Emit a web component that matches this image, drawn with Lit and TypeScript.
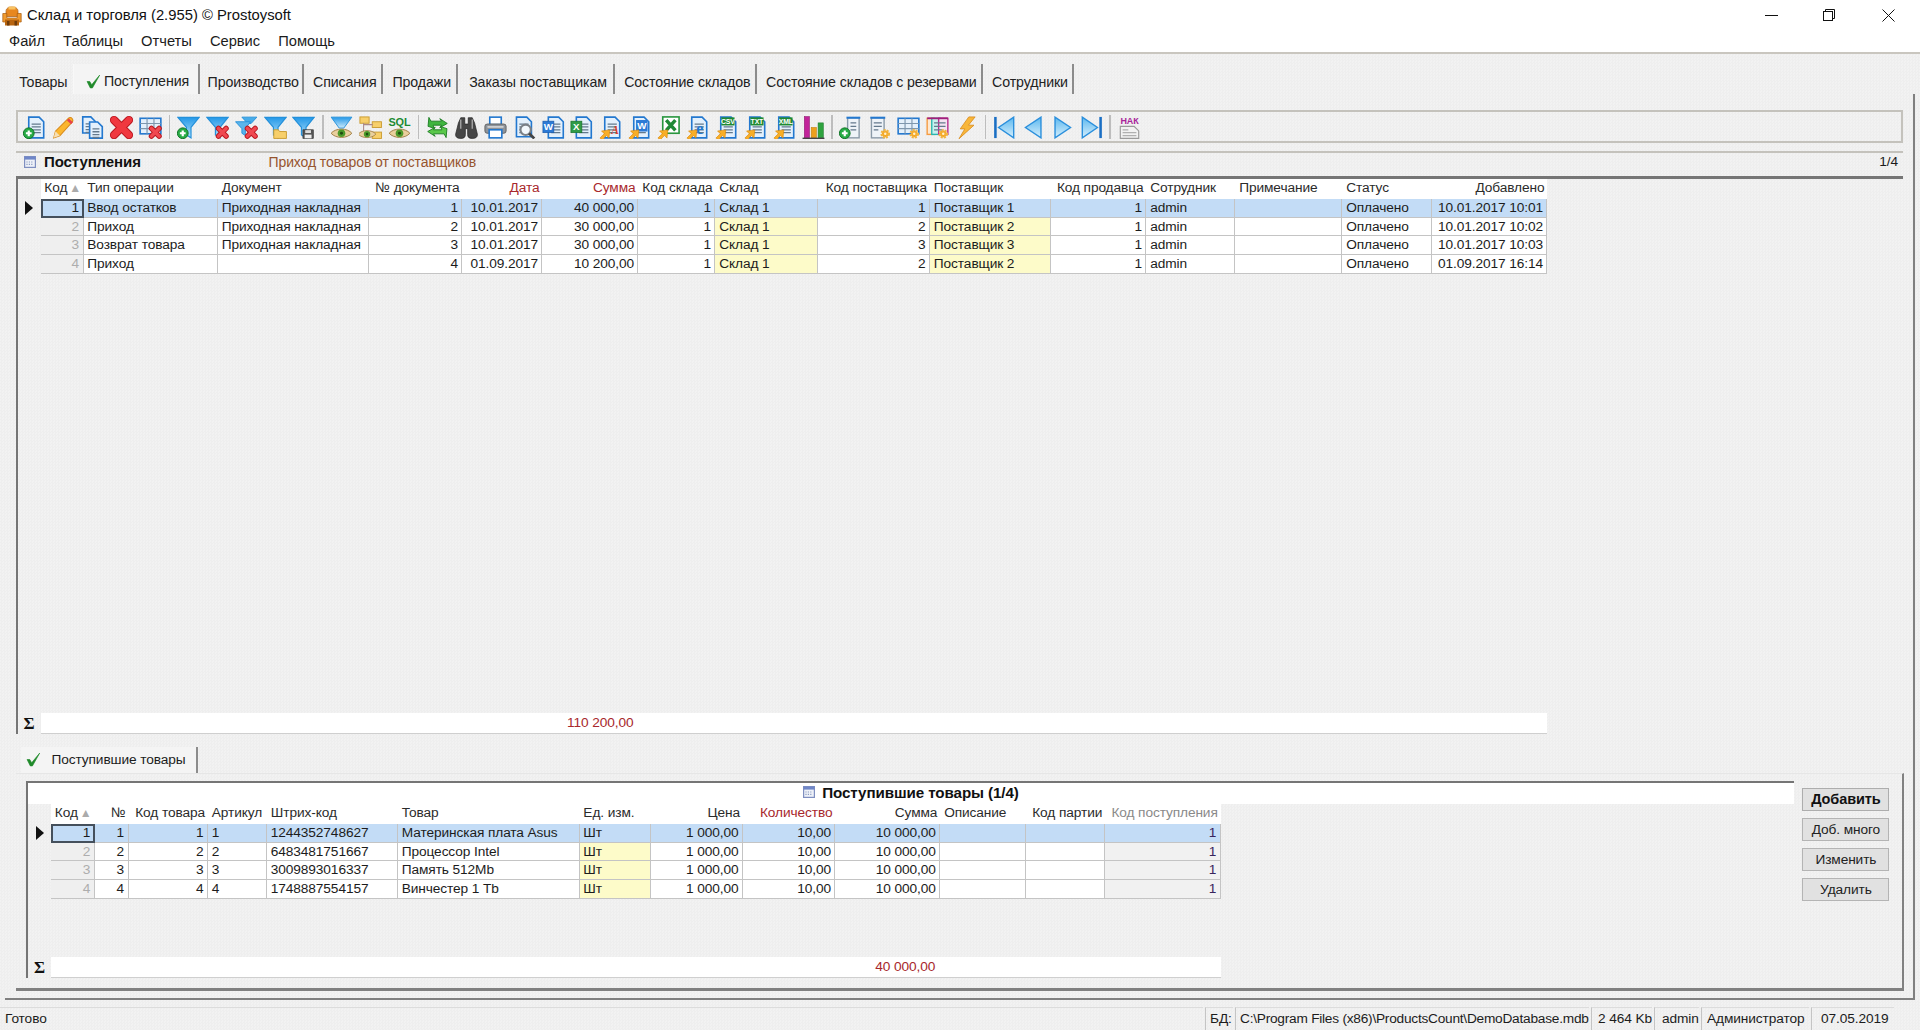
import { LitElement, html, css, svg } from "lit";
import { customElement, property } from "lit/decorators.js";

const S = (c: any, size = 23) => html`<svg class="ic" viewBox="0 0 20 20" width=${size} height=${size}>${c}</svg>`;

const plus = svg`<circle cx="5" cy="15" r="4.700" fill="#27ab45" stroke="#0c6f22" stroke-width=".8"/><path d="M2.500 15h5M5 12.500v5" stroke="#fff" stroke-width="1.900"/>`;
const redx = svg`<path d="M10.800 10.800l6.700 6.700M17.500 10.800l-6.700 6.700" stroke="#b9161e" stroke-width="4.600" stroke-linecap="round"/><path d="M10.800 10.800l6.700 6.700M17.500 10.800l-6.700 6.700" stroke="#f04850" stroke-width="3" stroke-linecap="round"/>`;
const gear = svg`<circle cx="15" cy="15.500" r="3" fill="#f5a623" stroke="#f2b440" stroke-width="2.400" stroke-dasharray="1.600 .9"/><circle cx="15" cy="15.500" r="1.100" fill="#fff3d0"/>`;
const arrow = svg`<path d="M.800 19.200l3.800-3.800-2.400-2.400 7.200-.9-.7 7.100-2.200-2.200-3.500 3.500z" fill="#f8ae27" stroke="#d98300" stroke-width=".5"/>`;
const doc = (x = 4, y = 1, w = 13, h = 17) => svg`<path d="M${x} ${y}h${w - 4}l4 4v${h - 4}h-${w}z" fill="#e3f0fc" stroke="#2378cf" stroke-width="1.400"/><path d="M${x + 2.500} ${y + 6}h${w - 5}M${x + 2.500} ${y + 8.500}h${w - 5}M${x + 2.500} ${y + 11}h${w - 5}M${x + 2.500} ${y + 13.500}h${w - 5}" stroke="#64798c" stroke-width="1.100"/>`;
const funnel = svg`<defs><linearGradient id="fg" x1="0" x2="0" y1="0" y2="1"><stop offset="0" stop-color="#2398e8"/><stop offset="1" stop-color="#b5e2fb"/></linearGradient></defs><path d="M.800 1.200h18.400l-7 8.600v9.200l-4-2.500V9.800z" fill="url(#fg)" stroke="#2490da" stroke-width="1"/>`;
const eye = svg`<path d="M1 15C5 10.200 15 10.200 19 15 15 19.800 5 19.800 1 15z" fill="#e9cf9d" stroke="#9c7a40" stroke-width=".8"/><circle cx="10" cy="15" r="3.300" fill="#4c9a2a"/><circle cx="10" cy="15" r="1.300" fill="#1f4d10"/>`;
const tag = (t: string, c = "#1f8a32") => svg`<rect x="5.500" y="1.200" width="11.500" height="7" fill=${c}/><text x="11.200" y="7.200" text-anchor="middle" font-size="6" font-weight="700" fill="#fff" font-family="Liberation Sans, sans-serif">${t}</text>`;
const grid = svg`<rect x="1" y="2" width="18" height="13.500" fill="#e4f0fb" stroke="#2378cf" stroke-width="1.400"/><path d="M1 6.500h18M1 11h18M7 2v13.500M13 2v13.500" stroke="#7e97ae"/>`;

const ICONS: Record<string, any> = {
  docadd: svg`${doc(5, 1, 13, 18)}${plus}`,
  pencil: svg`<path d="M1.500 19l1.500-5.800L14 2.200c1.200-1.200 2.700-1 3.500 0s.8 2.300-.2 3.300L6.800 17.200z" fill="#fbb62f" stroke="#d98a1a" stroke-width=".9"/><path d="M13.800 3l3.600 3.300" stroke="#e8424a" stroke-width="2.400"/><path d="M1.500 19L3 13.200l3.800 4z" fill="#f6dfb4"/>`,
  copy: svg`${doc(1.500, .8, 11, 14)}${doc(7.500, 5.200, 11, 14)}`,
  del: svg`<path d="M3.500 3.500l13 13M16.500 3.500l-13 13" stroke="#b9161e" stroke-width="7.200" stroke-linecap="round"/><path d="M3.500 3.500l13 13M16.500 3.500l-13 13" stroke="#f0383f" stroke-width="5.600" stroke-linecap="round"/>`,
  griddel: svg`${grid}${redx}`,
  fadd: svg`${funnel}${plus}`,
  fdel: svg`${funnel}${redx}`,
  fdel2: svg`<path d="M6 1h13l-5 5.500H11z" fill="#47ace9" stroke="#2490da" stroke-width=".8"/><path d="M.500 5h13l-4.500 6v6l-3-2v-4z" fill="#5bb5ec" stroke="#2490da" stroke-width=".8"/>${redx}`,
  ffold: svg`${funnel}<path d="M8.500 12h4l1 1.500H19.500v6H8.500z" fill="#f7cf6a" stroke="#c99a2e" stroke-width=".8"/>`,
  fsave: svg`${funnel}<rect x="9.500" y="12" width="9" height="7.500" fill="#555" stroke="#222" stroke-width=".5"/><rect x="11.500" y="12.300" width="5" height="2.500" fill="#ddd"/><rect x="11" y="16.200" width="6" height="3.200" fill="#eee"/>`,
  feye: svg`<defs><linearGradient id="fg2" x1="0" x2="0" y1="0" y2="1"><stop offset="0" stop-color="#2398e8"/><stop offset="1" stop-color="#cdeafb"/></linearGradient></defs><path d="M1 1h18l-7 9.500H8z" fill="url(#fg2)" stroke="#2490da" stroke-width=".8"/>${eye}`,
  treeeye: svg`<rect x=".800" y=".800" width="8" height="5.500" fill="#f7cf6a" stroke="#c99a2e" stroke-width=".8"/><rect x="11.500" y="5" width="8" height="5" fill="#f7cf6a" stroke="#c99a2e" stroke-width=".8"/><rect x="11.500" y="14" width="8" height="5.500" fill="#f7cf6a" stroke="#c99a2e" stroke-width=".8"/><path d="M4 6v8M4 7.500h8" stroke="#a88" stroke-width=".9"/><g transform="translate(-1.500 3) scale(.85)">${eye}</g>`,
  sqleye: svg`<text x="10" y="8.500" text-anchor="middle" font-size="9.500" font-weight="700" fill="#1c8a32" font-family="Liberation Sans, sans-serif">SQL</text>${eye}`,
  sync: svg`<path d="M2.500 1.200l1.800 3.300h9.200L12 2.300l6.500 4.200-6.500 3.700 1.500-2.200H6.200l1 2.700L1.800 9z" fill="#3fb53f" stroke="#1d7d24" stroke-width=".8"/><path d="M17.500 18.800l-1.800-3.300H6.500L8 17.700 1.500 13.500 8 9.800l-1.500 2.200h7.300l-1-2.700L18.200 11z" fill="#5ac84a" stroke="#1d7d24" stroke-width=".8"/>`,
  binoc: svg`<path d="M3 6l2-4.500h3.500V7h3V1.500H15L17 6l2.500 10c0 2.500-1.500 3.500-4.500 3.500s-4-1.200-4-3.500V11H9v5c0 2.300-1 3.500-4 3.500S.5 18.500.5 16z" fill="#474747" stroke="#222" stroke-width=".6"/><path d="M5 3v8M15 3v8" stroke="#a6a6a6" stroke-width="1.200"/>`,
  print: svg`<rect x="5" y="1" width="10" height="6.500" fill="#fff" stroke="#2378cf" stroke-width="1.400"/><rect x=".800" y="7" width="18.400" height="8" rx="2" fill="#8f949a" stroke="#5e5e5e" stroke-width=".8"/><rect x="4.500" y="12" width="11" height="7" fill="#fff" stroke="#2378cf" stroke-width="1.400"/><path d="M3 9.500h14" stroke="#e3e3e3" stroke-width="1.200"/>`,
  preview: svg`${doc(3, 1, 13, 17)}<circle cx="11" cy="12" r="4.500" fill="#f2f8fd" stroke="#7a8087" stroke-width="1.800"/><path d="M14 15.200l4.500 4.300" stroke="#444" stroke-width="2.400"/>`,
  word: svg`${doc(5.500, 1, 13, 18)}<rect x=".800" y="4.500" width="9.500" height="10" fill="#2c7ad6" stroke="#1c5aa8" stroke-width=".6"/><text x="5.500" y="12.500" text-anchor="middle" font-size="8.500" font-weight="700" fill="#fff" font-family="Liberation Sans, sans-serif">W</text>`,
  xls: svg`${doc(5.500, 1, 13, 18)}<rect x=".800" y="4.500" width="9.500" height="10" fill="#2f9b47" stroke="#17702a" stroke-width=".6"/><text x="5.500" y="12.500" text-anchor="middle" font-size="8.500" font-weight="700" fill="#fff" font-family="Liberation Sans, sans-serif">X</text>`,
  pdfexp: svg`${doc(5, 1, 13, 18)}<text x="14" y="16" text-anchor="middle" font-size="10" font-style="italic" font-weight="700" fill="#d83b2b" font-family="Liberation Serif, serif">A</text>${arrow}`,
  wordexp: svg`${doc(5, 1, 13, 18)}<rect x="7" y="3.500" width="10" height="10" fill="#2c7ad6"/><text x="12" y="11.500" text-anchor="middle" font-size="8.500" font-weight="700" fill="#fff" font-family="Liberation Sans, sans-serif">W</text>${arrow}`,
  xlsexp: svg`<rect x="5" y=".800" width="14.200" height="14.200" fill="#fff" stroke="#28963e" stroke-width="1.400"/><path d="M8 3.500l8 9M16 3.500l-8 9" stroke="#1f8a36" stroke-width="3"/>${arrow}`,
  ieexp: svg`${doc(5, 1, 13, 18)}<text x="12" y="15.500" text-anchor="middle" font-size="14" font-weight="700" fill="#2378cf" font-family="Liberation Serif, serif">e</text>${arrow}`,
  csv: svg`${doc(5, 1, 13, 18)}${tag("CSV")}${arrow}`,
  txt: svg`${doc(5, 1, 13, 18)}${tag("TXT")}${arrow}`,
  xml: svg`${doc(5, 1, 13, 18)}${tag("XML")}${arrow}`,
  chart: svg`<rect x="2" y=".500" width="4.500" height="18.500" fill="#c2249a" stroke="#8e1a70" stroke-width=".5"/><rect x="8" y="10" width="4.500" height="9" fill="#eda01d" stroke="#bf7d10" stroke-width=".5"/><rect x="14" y="6" width="4.500" height="13" fill="#2fa33f" stroke="#1b7a2a" stroke-width=".5"/><path d="M.500 19.400h19" stroke="#444" stroke-width="1.200"/>`,
  coladd: svg`<rect x="7.500" y="1.500" width="10" height="17.500" fill="#eef3f8" stroke="#8a9aa8" stroke-width="1.200"/><path d="M6.500 1.500h12" stroke="#2378cf" stroke-width="1.800"/><path d="M10 6h5M10 9h5M10 12h5" stroke="#64798c"/>${plus}`,
  colgear: svg`<rect x="3" y="1.500" width="11" height="17.500" fill="#eef3f8" stroke="#8a9aa8" stroke-width="1.200"/><path d="M2 1.500h13" stroke="#2378cf" stroke-width="1.800"/><path d="M5 6h7M5 9h7M5 12h4" stroke="#64798c"/>${gear}`,
  gridgear: svg`${grid}${gear}`,
  multigear: svg`<rect x="1" y="2" width="6" height="14" fill="#fde8d0" stroke="#f59a40" stroke-width="1.200"/><rect x="5" y="2" width="7" height="14" fill="#c8f0ee" stroke="#2ab6b0" stroke-width="1.200"/><rect x="11" y="2" width="8" height="14" fill="#f4e4f2" stroke="#b82c8c" stroke-width="1.200"/><path d="M1 2h18" stroke="#a01f7c" stroke-width="1.600"/><path d="M7 6h10M7 9h10M7 12h7" stroke="#64798c"/>${gear}`,
  bolt: svg`<path d="M12 .800L4.500 11.200h4L3.500 19.800 16.500 8h-4.800L17.500 .800z" fill="#f8b63a" stroke="#d98a1a" stroke-width=".7"/>`,
  first: svg`<defs><linearGradient id="nv" x1="0" x2="0" y1="0" y2="1"><stop offset="0" stop-color="#5cb8ef"/><stop offset="1" stop-color="#d6effc"/></linearGradient></defs><rect x="1" y=".800" width="2.200" height="18.400" fill="#1a6fc4"/><path d="M18 1v18L4.800 10z" fill="url(#nv)" stroke="#2a8fdc" stroke-width="1.200"/>`,
  prev: svg`<path d="M16.500 1v18L3 10z" fill="url(#nv)" stroke="#2a8fdc" stroke-width="1.200"/>`,
  next: svg`<path d="M3.500 1v18L17 10z" fill="url(#nv)" stroke="#2a8fdc" stroke-width="1.200"/>`,
  last: svg`<rect x="16.800" y=".800" width="2.200" height="18.400" fill="#1a6fc4"/><path d="M2 1v18l13.200-9z" fill="url(#nv)" stroke="#2a8fdc" stroke-width="1.200"/>`,
  nak: svg`<text x="10" y="7" text-anchor="middle" font-size="7.800" font-weight="700" fill="#a8249a" font-family="Liberation Sans, sans-serif">НАК</text><path d="M2 9h12l4 4v6.500H2z" fill="#f2f2f2" stroke="#9a9a9a"/><path d="M4 12h5M4 14.500h12M4 17h12" stroke="#b0b0b0"/>`,
};

const TOOLBAR = ["docadd", "pencil", "copy", "del", "griddel", "|", "fadd", "fdel", "fdel2", "ffold", "fsave", "|", "feye", "treeeye", "sqleye", "|", "sync", "binoc", "print", "preview", "word", "xls", "pdfexp", "wordexp", "xlsexp", "ieexp", "csv", "txt", "xml", "chart", "|", "coladd", "colgear", "gridgear", "multigear", "bolt", "|", "first", "prev", "next", "last", "|", "nak"];

interface Col { t: string; w: number; r?: boolean; red?: boolean; y?: boolean; dim?: boolean; key?: boolean; sum?: string; }

@customElement("data-grid")
class DataGrid extends LitElement {
  @property({ type: Array }) cols: Col[] = [];
  @property({ type: Array }) rows: string[][] = [];
  @property({ type: Number }) ind = 25;

  static styles = css`
    :host { display: flex; flex-direction: column; flex: 1; min-height: 0; }
    .g { display: grid; width: max-content; grid-auto-rows: 18.67px; }
    .hd { display: grid; width: max-content; height: 20.500px; }
    .h { background: #fff; padding: 0 3px 0 3.800px; line-height: 18px; white-space: nowrap; color: #2b2b2b; }
    .h.r { text-align: right; }
    .h.red { color: #a8282c; }
    .h.dim { color: #8a8a8a; }
    .tri { color: #ababab; font-size: 12px; margin-left: 2px; }
    .c { background: #fff; border-right: 1px solid #c4c4c4; border-bottom: 1px solid #c4c4c4; padding: 0 3.500px 0 3.800px; line-height: 17.500px; white-space: nowrap; color: #1c1c1c; box-sizing: border-box; }
    .c.r { text-align: right; }
    .c.y { background: #fdfbc9; }
    .c.key { background: #efefef; color: #adadad; }
    .c.dim { background: #f1f1f1; color: #38245c; }
    .c.sel { background: #c3dcf6; }
    .c.sel.key { color: #1c1c1c; outline: 2px solid #45505c; outline-offset: -2px; }
    .ptr { display: flex; align-items: center; justify-content: center; }
    .ptr i { width: 0; height: 0; border-left: 8px solid #111; border-top: 7px solid transparent; border-bottom: 7px solid transparent; }
    .sum { display: grid; width: max-content; height: 21px; margin-top: auto; }
    .s { background: #fff; border-bottom: 1px solid #cfcfcf; text-align: right; padding-right: 5px; line-height: 19.500px; color: #a8282c; white-space: nowrap; box-sizing: border-box; }
    .sig { font: 700 17px "Liberation Serif", serif; color: #111; text-align: center; line-height: 21px; }
  `;

  render() {
    const tpl = `${this.ind}px ${this.cols.map((c) => c.w + "px").join(" ")}`;
    const st = `grid-template-columns:${tpl}`;
    return html`
      <div class="hd" style=${st}>
        <div></div>
        ${this.cols.map((c) => html`<div class="h ${c.r && !c.key ? "r" : ""} ${c.red ? "red" : ""} ${c.dim ? "dim" : ""}">${c.t}${c.key ? html`<span class="tri">▲</span>` : ""}</div>`)}
      </div>
      <div class="g" style=${st}>
        ${this.rows.map((row, i) => html`
          <div class="ptr">${i === 0 ? html`<i></i>` : ""}</div>
          ${row.map((v, j) => {
            const c = this.cols[j];
            const cl = ["c", c.r ? "r" : "", i === 0 ? "sel" : c.y ? "y" : "", c.key ? "key" : "", c.dim ? "dim" : ""].join(" ");
            return html`<div class=${cl}>${v}</div>`;
          })}
        `)}
      </div>
      <div class="sum" style=${st}>
        <div class="sig">Σ</div>
        ${this.cols.map((c) => html`<div class="s">${c.sum ?? ""}</div>`)}
      </div>
    `;
  }
}

const TOP_COLS: Col[] = [
  { t: "Код", w: 43, r: true, key: true },
  { t: "Тип операции", w: 134.4 },
  { t: "Документ", w: 151.6 },
  { t: "№ документа", w: 93, r: true },
  { t: "Дата", w: 80, r: true, red: true },
  { t: "Сумма", w: 96, r: true, red: true, sum: "110 200,00" },
  { t: "Код склада", w: 77, r: true },
  { t: "Склад", w: 102.4, y: true },
  { t: "Код поставщика", w: 112.2, r: true },
  { t: "Поставщик", w: 121.4, y: true },
  { t: "Код продавца", w: 95, r: true },
  { t: "Сотрудник", w: 89 },
  { t: "Примечание", w: 107 },
  { t: "Статус", w: 90 },
  { t: "Добавлено", w: 115, r: true },
];
const TOP_ROWS = [
  ["1", "Ввод остатков", "Приходная накладная", "1", "10.01.2017", "40 000,00", "1", "Склад 1", "1", "Поставщик 1", "1", "admin", "", "Оплачено", "10.01.2017 10:01"],
  ["2", "Приход", "Приходная накладная", "2", "10.01.2017", "30 000,00", "1", "Склад 1", "2", "Поставщик 2", "1", "admin", "", "Оплачено", "10.01.2017 10:02"],
  ["3", "Возврат товара", "Приходная накладная", "3", "10.01.2017", "30 000,00", "1", "Склад 1", "3", "Поставщик 3", "1", "admin", "", "Оплачено", "10.01.2017 10:03"],
  ["4", "Приход", "", "4", "01.09.2017", "10 200,00", "1", "Склад 1", "2", "Поставщик 2", "1", "admin", "", "Оплачено", "01.09.2017 16:14"],
];
const LOW_COLS: Col[] = [
  { t: "Код", w: 43.7, r: true, key: true },
  { t: "№", w: 33.9, r: true },
  { t: "Код товара", w: 79.4, r: true },
  { t: "Артикул", w: 59 },
  { t: "Штрих-код", w: 131 },
  { t: "Товар", w: 181.6 },
  { t: "Ед. изм.", w: 71.8, y: true },
  { t: "Цена", w: 91.6, r: true },
  { t: "Количество", w: 92.5, r: true, red: true },
  { t: "Сумма", w: 104.9, r: true, sum: "40 000,00" },
  { t: "Описание", w: 86.1 },
  { t: "Код партии", w: 78.8, r: true },
  { t: "Код поступления", w: 115.5, r: true, dim: true },
];
const LOW_ROWS = [
  ["1", "1", "1", "1", "1244352748627", "Материнская плата Asus", "Шт", "1 000,00", "10,00", "10 000,00", "", "", "1"],
  ["2", "2", "2", "2", "6483481751667", "Процессор Intel", "Шт", "1 000,00", "10,00", "10 000,00", "", "", "1"],
  ["3", "3", "3", "3", "3009893016337", "Память 512Mb", "Шт", "1 000,00", "10,00", "10 000,00", "", "", "1"],
  ["4", "4", "4", "4", "1748887554157", "Винчестер 1 Tb", "Шт", "1 000,00", "10,00", "10 000,00", "", "", "1"],
];
const TABS: [string, number][] = [["Товары", 64.5], ["Поступления", 126], ["Производство", 104.5], ["Списания", 78.5], ["Продажи", 75.5], ["Заказы поставщикам", 157], ["Состояние складов", 141.7], ["Состояние складов с резервами", 226.3], ["Сотрудники", 91]];
const STATUS: [string, number, number][] = [["БД:", 28, 4], ["C:\\Program Files (x86)\\ProductsCount\\DemoDatabase.mdb", 354, 4], ["2 464 Kb", 61, 6], ["admin", 45, 7], ["Администратор", 108, 5], ["07.05.2019", 83, 9]];

const check = html`<svg class="chk" viewBox="0 0 14 14" width="15" height="15"><path d="M1 7l2.500 0 1.800 3L12.800 1 6 13H4z" fill="#1f8a2a" stroke="#1f8a2a" stroke-width=".6"/></svg>`;
const calIcon = html`<svg viewBox="0 0 10 10" width="12" height="12"><rect x=".5" y=".5" width="9" height="9" fill="#eef1f8" stroke="#7f8fc0"/><rect x=".5" y=".5" width="9" height="2.500" fill="#6f86c8"/><path d="M2 5h6M2 7h6" stroke="#8a9cc0" stroke-dasharray="1 1"/></svg>`;

@customElement("app-root")
class AppRoot extends LitElement {
  static styles = css`
    :host { display: flex; flex-direction: column; width: 1920px; height: 1030px; overflow: hidden; font: 13.700px "Liberation Sans", Arial, sans-serif; color: #1c1c1c; background: repeating-conic-gradient(#eeeeee 0 25%, #f2f2f2 0 50%) 0 0 / 3px 3px; letter-spacing: -.1px; }
    .title { height: 30px; background: #fff; display: flex; align-items: center; padding-left: 2px; flex: none; }
    .title .txt { margin-left: 5px; font-size: 14.800px; letter-spacing: 0; color: #111; }
    .wc { margin-left: auto; display: flex; align-items: center; padding-right: 25px; gap: 45px; }
    .wc .rs { margin-right: 2.500px; }
    .menu { height: 24px; background: #fff; display: flex; align-items: center; gap: 18px; padding: 0 0 1px 9px; box-sizing: border-box; border-bottom: 2px solid #c9c6bf; flex: none; font-size: 14.700px; letter-spacing: 0; }
    .tabs { height: 40px; display: flex; align-items: flex-end; padding-left: 9px; flex: none; font-size: 14.200px; }
    .tab { height: 30px; box-sizing: border-box; display: flex; align-items: center; justify-content: center; white-space: nowrap; border-right: 2px solid #8c8c8c; color: #222; padding: 6px 0 0 5px; }
    .tab:first-child { border-right: 1px solid #f8f8f8; }
    .tab.on { background: #f4f4f4; padding: 4px 0 0 4px; gap: 3px; }
    .chk { flex: none; }
    .main { flex: 1; min-height: 0; display: flex; flex-direction: column; margin: 0 5px; border-right: 2px solid #808080; border-bottom: 2px solid #808080; box-sizing: border-box; padding: 16px 10px 7px 10.500px; min-width: 0; }
    .toolbar { height: 33px; flex: none; box-sizing: border-box; border: 2px solid #c4c2bc; display: flex; align-items: center; padding: 1px 0 0 3px; }
    .tb { width: 28.900px; display: flex; justify-content: center; flex: none; }
    .sp { width: 1.500px; height: 24px; background: #bdbdbd; margin: 0 3.750px; flex: none; }
    .ic { display: block; }
    .cap { height: 24.500px; margin-top: 8px; flex: none; border-top: 2px solid #c4c2bc; box-sizing: border-box; display: flex; align-items: center; padding: 0 5px 5px 8.500px; }
    .cap b { margin-left: 8px; font-size: 15px; color: #111; width: 224.500px; }
    .cap .sub { color: #96542e; font-size: 14px; }
    .cap .n { margin-left: auto; }
    .gridbox { height: 558px; flex: none; border-top: 3px solid #757575; border-left: 2px solid #757575; box-sizing: border-box; display: flex; }
    .subtabs { height: 39px; flex: none; display: flex; align-items: flex-end; }
    .stab { margin-left: 5px; width: 177px; height: 26px; box-sizing: border-box; background: #f4f4f4; border-right: 2px solid #8c8c8c; display: flex; align-items: center; padding-left: 5px; gap: 11px; white-space: nowrap; }
    .subpanel { flex: 1; min-height: 0; display: flex; border-top: 1px solid #e6e6e6; border-right: 2px solid #808080; border-bottom: 3px solid #808080; box-sizing: border-box; padding: 7px 0 10px 10.500px; margin-right: -1px; }
    .lowbox { width: 1768px; flex: none; border-top: 2px solid #757575; border-left: 2px solid #757575; box-sizing: border-box; display: flex; flex-direction: column; }
    .lowtitle { height: 21px; background: #fff; display: flex; align-items: center; justify-content: center; gap: 7px; flex: none; font-weight: 700; font-size: 15.200px; color: #111; box-sizing: border-box; padding-bottom: 2px; }
    .btns { display: flex; flex-direction: column; gap: 6.500px; padding: 7px 0 0 8.400px; }
    button { width: 87px; height: 23.500px; background: #e1e1e1; border: 1.500px solid #b4b4b4; font: inherit; color: #222; padding: 0; letter-spacing: inherit; }
    button.def { font-weight: 700; border-color: #adadad; color: #111; font-size: 14.500px; }
    .status { height: 30px; flex: none; display: flex; align-items: stretch; padding: 7px 26px 0 0; box-sizing: border-box; gap: 2px; }
    .st { border-top: 1px solid #dcdcdc; border-left: 1.500px solid #c4c4c4; line-height: 22px; white-space: nowrap; box-sizing: border-box; flex: none; }
    .st.first { flex: 1; border-left: none; padding-left: 5px; }
    .st.path { letter-spacing: -.24px; }
  `;

  render() {
    return html`
      <div class="title">
        <svg viewBox="0 0 20 20" width="20" height="21"><path d="M4 6c0-3 2-4.500 6-4.500S16 3 16 6v5H4z" fill="#e8871e" stroke="#a65a10" stroke-width=".7"/><rect x="6.500" y="1" width="7" height="3" fill="#f9c262"/><path d="M.800 8h4v4.500h10.400V8h4v8.500H.800z" fill="#f09a2e" stroke="#a65a10" stroke-width=".7"/><rect x="3" y="14" width="14" height="6" fill="#b8640f"/><rect x="5" y="15.500" width="2.500" height="4.500" fill="#6e3b0a"/><rect x="12.500" y="15.500" width="2.500" height="4.500" fill="#6e3b0a"/></svg>
        <span class="txt">Склад и торговля (2.955) © Prostoysoft</span>
        <div class="wc">
          <svg width="13" height="12" viewBox="0 0 13 12"><path d="M0 6.500h13" stroke="#111"/></svg>
          <svg class="rs" width="12" height="12" viewBox="0 0 12 12" fill="none" stroke="#111"><rect x=".5" y="2.500" width="9" height="9"/><path d="M2.500 2.500v-2h9v9h-2"/></svg>
          <svg width="13" height="13" viewBox="0 0 13 13" fill="none" stroke="#111"><path d="M.5.500l12 12M12.500.500l-12 12"/></svg>
        </div>
      </div>
      <div class="menu">${["Файл", "Таблицы", "Отчеты", "Сервис", "Помощь"].map((m) => html`<span>${m}</span>`)}</div>
      <div class="tabs">
        ${TABS.map(([t, w], i) => html`<div class="tab ${i === 1 ? "on" : ""}" style="width:${w}px">${i === 1 ? check : ""}<span>${t}</span></div>`)}
      </div>
      <div class="main">
        <div class="toolbar">
          ${TOOLBAR.map((k) => (k === "|" ? html`<div class="sp"></div>` : html`<div class="tb">${S(ICONS[k])}</div>`))}
        </div>
        <div class="cap">${calIcon}<b>Поступления</b><span class="sub">Приход товаров от поставщиков</span><span class="n">1/4</span></div>
        <div class="gridbox"><data-grid .cols=${TOP_COLS} .rows=${TOP_ROWS} .ind=${23}></data-grid></div>
        <div class="subtabs">
          <div class="stab">${check}<span>Поступившие товары</span></div>
        </div>
        <div class="subpanel">
          <div class="lowbox">
            <div class="lowtitle">${calIcon}<span>Поступившие товары (1/4)</span></div>
            <data-grid .cols=${LOW_COLS} .rows=${LOW_ROWS} .ind=${23}></data-grid>
          </div>
          <div class="btns">
            <button class="def">Добавить</button><button>Доб. много</button><button>Изменить</button><button>Удалить</button>
          </div>
        </div>
      </div>
      <div class="status">
        <div class="st first">Готово</div>
        ${STATUS.map(([t, w, p], i) => html`<div class="st ${i === 1 ? "path" : ""}" style="width:${w}px;padding-left:${p}px">${t}</div>`)}
      </div>
    `;
  }
}
